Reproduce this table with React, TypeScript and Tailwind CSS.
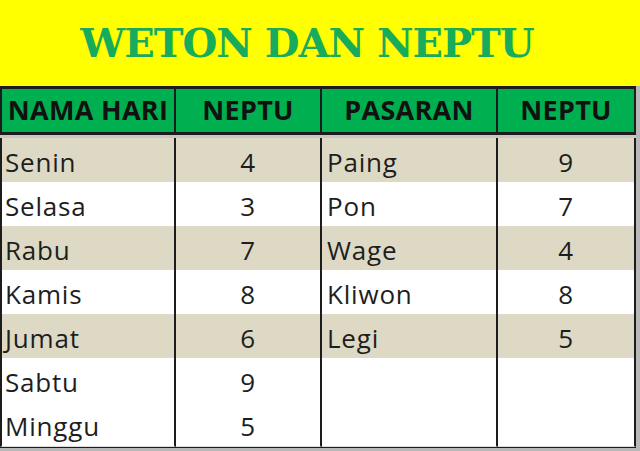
import React from "react";

type Row = { hari: string; nh: string; pasaran: string; np: string; tanL: boolean; tanR: boolean };

const rows: Row[] = [
  { hari: "Senin", nh: "4", pasaran: "Paing", np: "9", tanL: true, tanR: true },
  { hari: "Selasa", nh: "3", pasaran: "Pon", np: "7", tanL: false, tanR: false },
  { hari: "Rabu", nh: "7", pasaran: "Wage", np: "4", tanL: true, tanR: true },
  { hari: "Kamis", nh: "8", pasaran: "Kliwon", np: "8", tanL: false, tanR: false },
  { hari: "Jumat", nh: "6", pasaran: "Legi", np: "5", tanL: true, tanR: true },
  { hari: "Sabtu", nh: "9", pasaran: "", np: "", tanL: false, tanR: false },
  { hari: "Minggu", nh: "5", pasaran: "", np: "", tanL: false, tanR: false },
];

const cols = "grid grid-cols-[176px_146px_176px_138px]";

export default function App() {
  return (
    <div
      className="w-[640px] h-[451px] overflow-hidden bg-[#b8b8b8]"
      style={{ fontFamily: '"Open Sans", "Liberation Sans", sans-serif' }}
    >
      {/* judul */}
      <div className="h-[86px] bg-[#ffff00] flex items-center justify-center pr-[26px]">
        <h1
          className="text-[40px] font-black tracking-[-1px] text-[#17ab5c] leading-none"
          style={{ fontFamily: '"DejaVu Serif", serif' }}
        >
          WETON DAN NEPTU
        </h1>
      </div>

      <div className="w-[636px] bg-white">
        {/* header */}
        <div className={`${cols} h-[49px] bg-[#00b050] border-y-[3px] border-[#1c1c1c]`}>
          {["NAMA HARI", "NEPTU", "PASARAN", "NEPTU"].map((h, i) => (
            <div
              key={i}
              className={`flex items-center justify-center border-r-2 border-[#1c1c1c] text-[27px] font-bold text-[#111] tracking-[0.3px] ${
                i === 0 ? "border-l-2" : ""
              }`}
            >
              {h}
            </div>
          ))}
        </div>
        <div className="h-[3px] bg-[#c8c8c8]" />

        {/* isi */}
        {rows.map((r) => (
          <div key={r.hari} className={`${cols} h-[44px] text-[26px] text-[#1e1e1e] tracking-[0.8px]`}>
            <div
              className={`flex items-center pl-[3px] pt-[5px] border-l-2 border-r-2 border-[#1c1c1c] border-b border-b-[#dcdcdc] ${
                r.tanL ? "bg-[#ddd9c4]" : "bg-white"
              }`}
            >
              {r.hari}
            </div>
            <div
              className={`flex items-center justify-center pt-[5px] border-r-2 border-[#1c1c1c] border-b border-b-[#dcdcdc] ${
                r.tanL ? "bg-[#ddd9c4]" : "bg-white"
              }`}
            >
              {r.nh}
            </div>
            <div
              className={`flex items-center pl-[5px] pt-[5px] border-r-2 border-[#1c1c1c] border-b border-b-[#dcdcdc] ${
                r.tanR ? "bg-[#ddd9c4]" : "bg-white"
              }`}
            >
              {r.pasaran}
            </div>
            <div
              className={`flex items-center justify-center pt-[5px] border-r-2 border-[#1c1c1c] border-b border-b-[#dcdcdc] ${
                r.tanR ? "bg-[#ddd9c4]" : "bg-white"
              }`}
            >
              {r.np}
            </div>
          </div>
        ))}
        <div className="h-[2px] bg-[#1c1c1c]" />
      </div>
    </div>
  );
}
